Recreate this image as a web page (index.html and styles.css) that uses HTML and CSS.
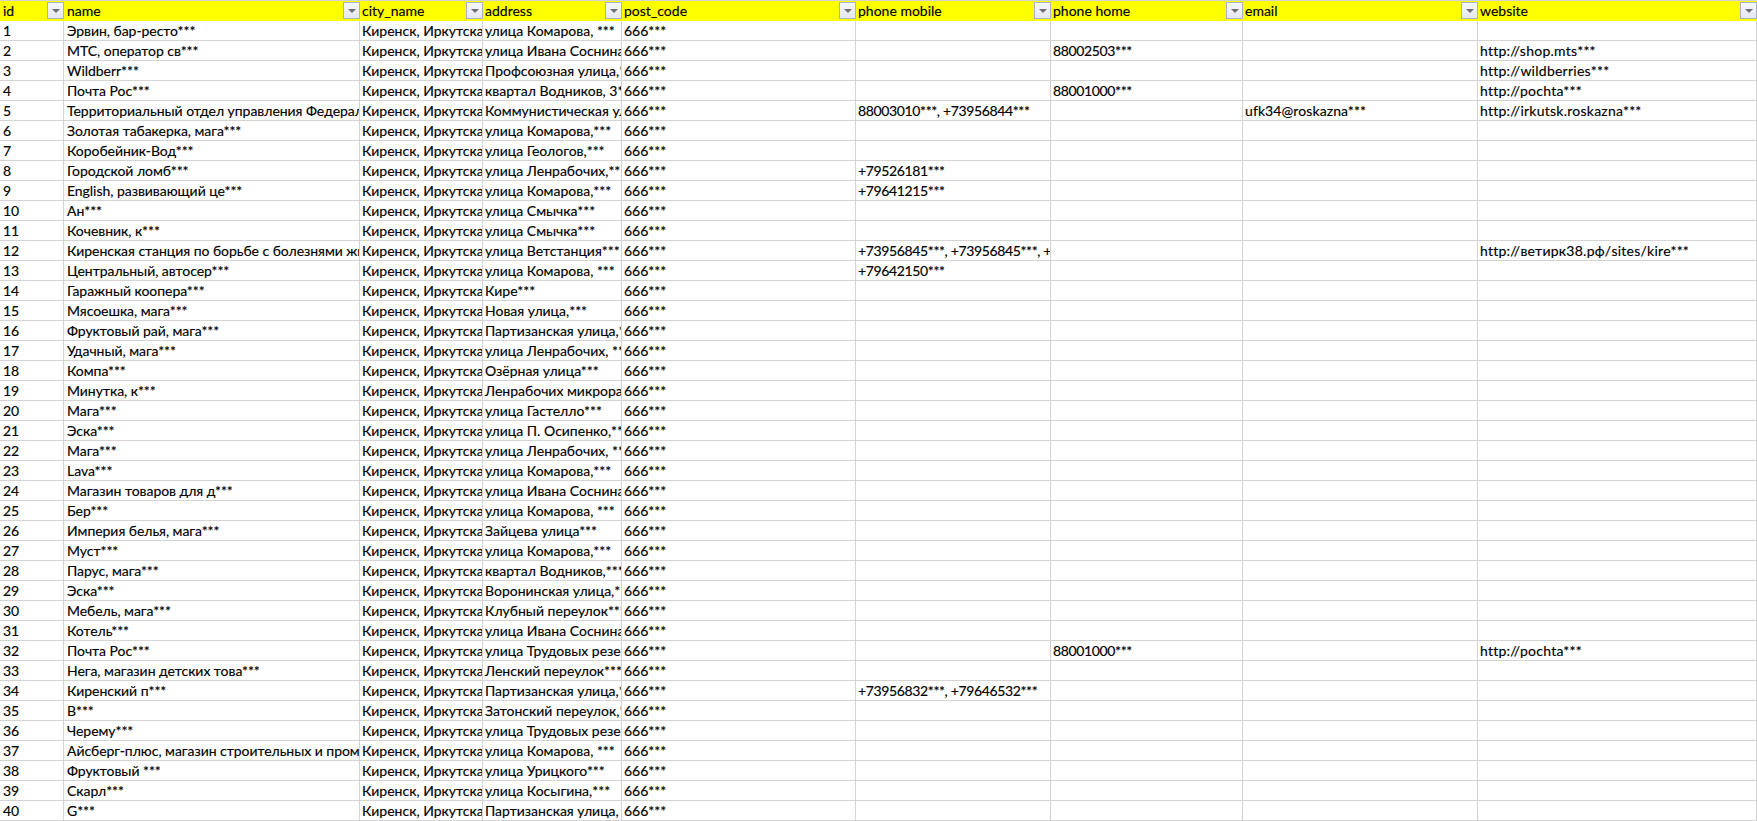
FILE: index.html
```html
<!DOCTYPE html>
<html lang="ru">
<head>
<meta charset="utf-8">
<title>Sheet</title>
<link rel="stylesheet" href="styles.css">
</head>
<body>
<table class="sheet">
<colgroup><col class="c-id"><col class="c-name"><col class="c-city"><col class="c-addr"><col class="c-post"><col class="c-mob"><col class="c-home"><col class="c-mail"><col class="c-web"></colgroup>
<thead><tr>
<th><div class="head"><span>id</span><span class="filter"></span></div></th>
<th><div class="head"><span>name</span><span class="filter"></span></div></th>
<th><div class="head"><span>city_name</span><span class="filter"></span></div></th>
<th><div class="head"><span>address</span><span class="filter"></span></div></th>
<th><div class="head"><span>post_code</span><span class="filter"></span></div></th>
<th><div class="head"><span>phone mobile</span><span class="filter"></span></div></th>
<th><div class="head"><span>phone home</span><span class="filter"></span></div></th>
<th><div class="head"><span>email</span><span class="filter"></span></div></th>
<th><div class="head"><span>website</span><span class="filter"></span></div></th>
</tr></thead>
<tbody>
<tr><td>1</td><td>Эрвин, бар-ресто***</td><td>Киренск, Иркутская область</td><td>улица Комарова, ***</td><td>666***</td><td></td><td></td><td></td><td></td></tr>
<tr><td>2</td><td>МТС, оператор св***</td><td>Киренск, Иркутская область</td><td>улица Ивана Соснина***</td><td>666***</td><td></td><td>88002503***</td><td></td><td>http://shop.mts***</td></tr>
<tr><td>3</td><td>Wildberr***</td><td>Киренск, Иркутская область</td><td>Профсоюзная улица,***</td><td>666***</td><td></td><td></td><td></td><td>http://wildberries***</td></tr>
<tr><td>4</td><td>Почта Рос***</td><td>Киренск, Иркутская область</td><td>квартал Водников, 3***</td><td>666***</td><td></td><td>88001000***</td><td></td><td>http://pochta***</td></tr>
<tr><td>5</td><td>Территориальный отдел управления Федерального казначейства</td><td>Киренск, Иркутская область</td><td>Коммунистическая улица***</td><td>666***</td><td>88003010***, +73956844***</td><td></td><td>ufk34@roskazna***</td><td>http://irkutsk.roskazna***</td></tr>
<tr><td>6</td><td>Золотая табакерка, мага***</td><td>Киренск, Иркутская область</td><td>улица Комарова,***</td><td>666***</td><td></td><td></td><td></td><td></td></tr>
<tr><td>7</td><td>Коробейник-Вод***</td><td>Киренск, Иркутская область</td><td>улица Геологов,***</td><td>666***</td><td></td><td></td><td></td><td></td></tr>
<tr><td>8</td><td>Городской ломб***</td><td>Киренск, Иркутская область</td><td>улица Ленрабочих,***</td><td>666***</td><td>+79526181***</td><td></td><td></td><td></td></tr>
<tr><td>9</td><td>English, развивающий це***</td><td>Киренск, Иркутская область</td><td>улица Комарова,***</td><td>666***</td><td>+79641215***</td><td></td><td></td><td></td></tr>
<tr><td>10</td><td>Ан***</td><td>Киренск, Иркутская область</td><td>улица Смычка***</td><td>666***</td><td></td><td></td><td></td><td></td></tr>
<tr><td>11</td><td>Кочевник, к***</td><td>Киренск, Иркутская область</td><td>улица Смычка***</td><td>666***</td><td></td><td></td><td></td><td></td></tr>
<tr><td>12</td><td>Киренская станция по борьбе с болезнями животных</td><td>Киренск, Иркутская область</td><td>улица Ветстанция***</td><td>666***</td><td>+73956845***, +73956845***, +73956845***</td><td></td><td></td><td>http://ветирк38.рф/sites/kire***</td></tr>
<tr><td>13</td><td>Центральный, автосер***</td><td>Киренск, Иркутская область</td><td>улица Комарова, ***</td><td>666***</td><td>+79642150***</td><td></td><td></td><td></td></tr>
<tr><td>14</td><td>Гаражный коопера***</td><td>Киренск, Иркутская область</td><td>Кире***</td><td>666***</td><td></td><td></td><td></td><td></td></tr>
<tr><td>15</td><td>Мясоешка, мага***</td><td>Киренск, Иркутская область</td><td>Новая улица,***</td><td>666***</td><td></td><td></td><td></td><td></td></tr>
<tr><td>16</td><td>Фруктовый рай, мага***</td><td>Киренск, Иркутская область</td><td>Партизанская улица,***</td><td>666***</td><td></td><td></td><td></td><td></td></tr>
<tr><td>17</td><td>Удачный, мага***</td><td>Киренск, Иркутская область</td><td>улица Ленрабочих, ***</td><td>666***</td><td></td><td></td><td></td><td></td></tr>
<tr><td>18</td><td>Компа***</td><td>Киренск, Иркутская область</td><td>Озёрная улица***</td><td>666***</td><td></td><td></td><td></td><td></td></tr>
<tr><td>19</td><td>Минутка, к***</td><td>Киренск, Иркутская область</td><td>Ленрабочих микрорайон***</td><td>666***</td><td></td><td></td><td></td><td></td></tr>
<tr><td>20</td><td>Мага***</td><td>Киренск, Иркутская область</td><td>улица Гастелло***</td><td>666***</td><td></td><td></td><td></td><td></td></tr>
<tr><td>21</td><td>Эска***</td><td>Киренск, Иркутская область</td><td>улица П. Осипенко,***</td><td>666***</td><td></td><td></td><td></td><td></td></tr>
<tr><td>22</td><td>Мага***</td><td>Киренск, Иркутская область</td><td>улица Ленрабочих, ***</td><td>666***</td><td></td><td></td><td></td><td></td></tr>
<tr><td>23</td><td>Lava***</td><td>Киренск, Иркутская область</td><td>улица Комарова,***</td><td>666***</td><td></td><td></td><td></td><td></td></tr>
<tr><td>24</td><td>Магазин товаров для д***</td><td>Киренск, Иркутская область</td><td>улица Ивана Соснина***</td><td>666***</td><td></td><td></td><td></td><td></td></tr>
<tr><td>25</td><td>Бер***</td><td>Киренск, Иркутская область</td><td>улица Комарова, ***</td><td>666***</td><td></td><td></td><td></td><td></td></tr>
<tr><td>26</td><td>Империя белья, мага***</td><td>Киренск, Иркутская область</td><td>Зайцева улица***</td><td>666***</td><td></td><td></td><td></td><td></td></tr>
<tr><td>27</td><td>Муст***</td><td>Киренск, Иркутская область</td><td>улица Комарова,***</td><td>666***</td><td></td><td></td><td></td><td></td></tr>
<tr><td>28</td><td>Парус, мага***</td><td>Киренск, Иркутская область</td><td>квартал Водников,***</td><td>666***</td><td></td><td></td><td></td><td></td></tr>
<tr><td>29</td><td>Эска***</td><td>Киренск, Иркутская область</td><td>Воронинская улица,***</td><td>666***</td><td></td><td></td><td></td><td></td></tr>
<tr><td>30</td><td>Мебель, мага***</td><td>Киренск, Иркутская область</td><td>Клубный переулок***</td><td>666***</td><td></td><td></td><td></td><td></td></tr>
<tr><td>31</td><td>Котель***</td><td>Киренск, Иркутская область</td><td>улица Ивана Соснина***</td><td>666***</td><td></td><td></td><td></td><td></td></tr>
<tr><td>32</td><td>Почта Рос***</td><td>Киренск, Иркутская область</td><td>улица Трудовых резервов***</td><td>666***</td><td></td><td>88001000***</td><td></td><td>http://pochta***</td></tr>
<tr><td>33</td><td>Нега, магазин детских това***</td><td>Киренск, Иркутская область</td><td>Ленский переулок***</td><td>666***</td><td></td><td></td><td></td><td></td></tr>
<tr><td>34</td><td>Киренский п***</td><td>Киренск, Иркутская область</td><td>Партизанская улица,***</td><td>666***</td><td>+73956832***, +79646532***</td><td></td><td></td><td></td></tr>
<tr><td>35</td><td>В***</td><td>Киренск, Иркутская область</td><td>Затонский переулок,***</td><td>666***</td><td></td><td></td><td></td><td></td></tr>
<tr><td>36</td><td>Черему***</td><td>Киренск, Иркутская область</td><td>улица Трудовых резервов***</td><td>666***</td><td></td><td></td><td></td><td></td></tr>
<tr><td>37</td><td>Айсберг-плюс, магазин строительных и промышленных товаров</td><td>Киренск, Иркутская область</td><td>улица Комарова, ***</td><td>666***</td><td></td><td></td><td></td><td></td></tr>
<tr><td>38</td><td>Фруктовый ***</td><td>Киренск, Иркутская область</td><td>улица Урицкого***</td><td>666***</td><td></td><td></td><td></td><td></td></tr>
<tr><td>39</td><td>Скарл***</td><td>Киренск, Иркутская область</td><td>улица Косыгина,***</td><td>666***</td><td></td><td></td><td></td><td></td></tr>
<tr><td>40</td><td>G***</td><td>Киренск, Иркутская область</td><td>Партизанская улица, ***</td><td>666***</td><td></td><td></td><td></td><td></td></tr>
</tbody>
</table>
</body>
</html>
```
FILE: styles.css
```css
html, body { margin: 0; padding: 0; background: #fff; }
body { overflow: hidden; }
.sheet {
  table-layout: fixed;
  border-collapse: separate;
  border-spacing: 0;
  width: 1757px;
  font-family: "Lato", "Open Sans", "Noto Sans", sans-serif;
  font-size: 14px;
  color: #000;
  -webkit-text-stroke: 0.15px #000;
}
.c-id { width: 64px; }
.c-name { width: 296px; }
.c-city { width: 123px; }
.c-addr { width: 139px; }
.c-post { width: 234px; }
.c-mob { width: 195px; }
.c-home { width: 192px; }
.c-mail { width: 235px; }
.c-web { width: 279px; }
th {
  height: 21px;
  box-sizing: border-box;
  padding: 0;
  background: #ffff00;
  border-top: 1px solid #d4d4d4;
  font-weight: 400;
  text-align: left;
}
.head {
  display: flex;
  align-items: flex-start;
  justify-content: space-between;
  height: 20px;
  line-height: 19px;
  padding-left: 3px;
  box-sizing: border-box;
}
th:nth-child(n+3) .head { padding-left: 2px; }
.filter {
  width: 17px;
  height: 17px;
  margin-top: 1px;
  box-sizing: border-box;
  border: 1px solid #a9b1c2;
  background: linear-gradient(#f7f8fa, #e4e7ec);
  display: flex;
  align-items: center;
  justify-content: center;
}
.filter::after {
  content: "";
  border-left: 4px solid transparent;
  border-right: 4px solid transparent;
  border-top: 4px solid #6c6f76;
}
td {
  height: 20px;
  box-sizing: border-box;
  padding: 1px 0 0 3px;
  border-right: 1px solid #d4d4d4;
  border-bottom: 1px solid #d4d4d4;
  white-space: nowrap;
  overflow: hidden;
  line-height: 18px;
}
td:nth-child(n+3) { padding-left: 2px; }
td:nth-child(2) { letter-spacing: -0.04px; }
td:nth-child(6), td:nth-child(7) { letter-spacing: -0.36px; }
td:nth-child(8) { letter-spacing: 0.1px; }
td:nth-child(9) { letter-spacing: 0.25px; }
```
